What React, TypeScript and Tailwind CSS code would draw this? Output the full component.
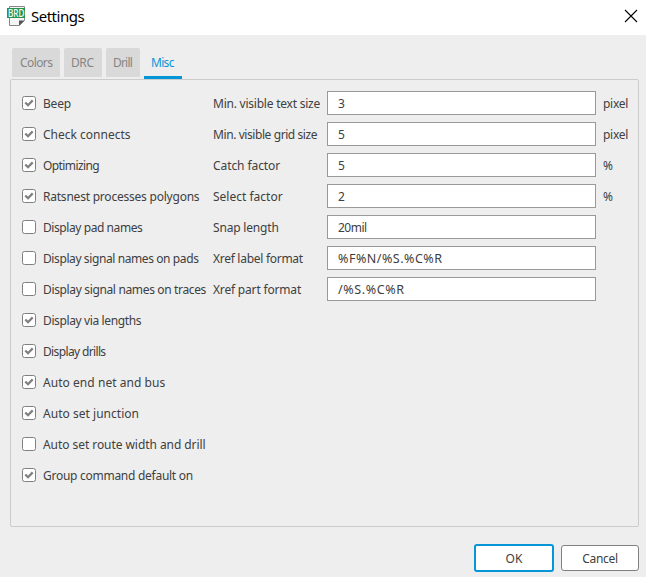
import React from "react";

type Option = { label: string; checked: boolean; tracking: string };
type Field = { label: string; value: string; unit?: string; tracking: string; valueTracking?: string };

const options: Option[] = [
  { label: "Beep", checked: true, tracking: "tracking-[-0.2px]" },
  { label: "Check connects", checked: true, tracking: "tracking-[0px]" },
  { label: "Optimizing", checked: true, tracking: "tracking-[-0.6px]" },
  { label: "Ratsnest processes polygons", checked: true, tracking: "tracking-[-0.22px]" },
  { label: "Display pad names", checked: false, tracking: "tracking-[-0.42px]" },
  { label: "Display signal names on pads", checked: false, tracking: "tracking-[-0.4px]" },
  { label: "Display signal names on traces", checked: false, tracking: "tracking-[-0.35px]" },
  { label: "Display via lengths", checked: true, tracking: "tracking-[-0.38px]" },
  { label: "Display drills", checked: true, tracking: "tracking-[-0.64px]" },
  { label: "Auto end net and bus", checked: true, tracking: "tracking-[0.05px]" },
  { label: "Auto set junction", checked: true, tracking: "tracking-[0.03px]" },
  { label: "Auto set route width and drill", checked: false, tracking: "tracking-[-0.06px]" },
  { label: "Group command default on", checked: true, tracking: "tracking-[-0.27px]" },
];

const fields: Field[] = [
  { label: "Min. visible text size", value: "3", unit: "pixel", tracking: "tracking-[-0.23px]" },
  { label: "Min. visible grid size", value: "5", unit: "pixel", tracking: "tracking-[-0.42px]" },
  { label: "Catch factor", value: "5", unit: "%", tracking: "tracking-[-0.08px]" },
  { label: "Select factor", value: "2", unit: "%", tracking: "tracking-[0px]" },
  { label: "Snap length", value: "20mil", tracking: "tracking-[-0.18px]", valueTracking: "tracking-[-0.5px]" },
  { label: "Xref label format", value: "%F%N/%S.%C%R", tracking: "tracking-[-0.28px]", valueTracking: "text-[12.5px] tracking-[0.5px]" },
  { label: "Xref part format", value: "/%S.%C%R", tracking: "tracking-[-0.18px]", valueTracking: "text-[12.5px] tracking-[0.6px]" },
];

function BoardIcon() {
  return (
    <svg width="20" height="20" viewBox="0 0 20 20" className="shrink-0">
      <path d="M2.5 .5h15v14l-5 5h-10z" fill="#f5f5f5" stroke="#888" />
      <path d="M12 19.5v-5h5.5z" fill="#555" />
      <rect x="0" y="2" width="18" height="10" fill="#259451" />
      <text x="1" y="10.6" fontSize="10" fontWeight="500" fill="#fff" textLength="16.5" lengthAdjust="spacingAndGlyphs">
        BRD
      </text>
    </svg>
  );
}

function Checkbox({ checked }: { checked: boolean }) {
  return (
    <svg width="14" height="14" viewBox="0 0 14 14" className="shrink-0">
      <rect x=".5" y=".5" width="13" height="13" rx="2" fill="#fff" stroke="#808080" />
      {checked && <path d="M3.3 6.5 6 9.2l4.7-4.8" fill="none" stroke="#808080" strokeWidth="2.3" />}
    </svg>
  );
}

export default function App() {
  return (
    <div className="flex h-[577px] w-[646px] flex-col overflow-hidden bg-[#eeeeee] font-['Noto_Sans',sans-serif] text-[12px] leading-4 whitespace-nowrap text-[#404040]">
      <header className="flex h-[35px] shrink-0 items-start bg-white pl-[7px] text-black">
        <div className="pt-[6px]"><BoardIcon /></div>
        <h1 className="ml-1 pt-[6px] text-[15px] leading-[21px] tracking-[-0.5px]">Settings</h1>
        <svg width="14" height="14" viewBox="0 0 14 14" className="mt-[9px] mr-[8px] ml-auto">
          <path d="M1 1l12 12M13 1 1 13" stroke="#000" strokeWidth="1.1" />
        </svg>
      </header>
      <nav className="flex h-[44px] shrink-0 gap-1 pt-[13px] text-[#858585] pl-3">
        <div className="flex h-[29px] w-12 items-center rounded-t-[2px] bg-[#d9d9d9] pl-2"><span className="tracking-[-0.6px]">Colors</span></div>
        <div className="flex h-[29px] w-[38px] items-center rounded-t-[2px] bg-[#d9d9d9] pl-[7px]"><span className="tracking-[-0.4px]">DRC</span></div>
        <div className="flex h-[29px] w-[34px] items-center rounded-t-[2px] bg-[#d9d9d9] pl-[7px]"><span className="tracking-[-0.8px]">Drill</span></div>
        <div className="flex h-[31px] w-[38px] items-center border-b-[3px] border-[#0696d7] pt-px pl-[7px] text-[#0696d7]"><span className="tracking-[-0.7px]">Misc</span></div>
      </nav>
      <main className="mr-[7px] ml-[10px] flex h-[448px] shrink-0 rounded-[2px] border border-[#cccccc] pt-[7px] pl-[11px]">
        <div className="w-[191px]">
          {options.map((o) => (
            <div key={o.label} className="flex h-[31px] items-center gap-[7px]">
              <Checkbox checked={o.checked} />
              <div className="pt-0.5"><span className={o.tracking}>{o.label}</span></div>
            </div>
          ))}
        </div>
        <div>
          {fields.map((f) => (
            <div key={f.label} className="flex h-[31px] items-center">
              <div className="w-[114px] pt-0.5"><span className={f.tracking}>{f.label}</span></div>
              <div className="flex h-6 w-[269px] items-center border border-[#999999] bg-white pt-0.5 pl-[10px]"><span className={f.valueTracking}>{f.value}</span></div>
              {f.unit && <div className="ml-[7px] pt-0.5"><span className="tracking-[-0.3px]">{f.unit}</span></div>}
            </div>
          ))}
        </div>
      </main>
      <footer className="mr-[7px] flex justify-end gap-[7px] pt-[17px]">
        <button className="h-7 w-20 rounded-[3px] border-2 border-[#0696d7] bg-white pt-px"><span>OK</span></button>
        <button className="mt-px h-[26px] w-[78px] rounded-[3px] border border-[#808080] bg-white pt-px"><span className="tracking-[-0.3px]">Cancel</span></button>
      </footer>
    </div>
  );
}
